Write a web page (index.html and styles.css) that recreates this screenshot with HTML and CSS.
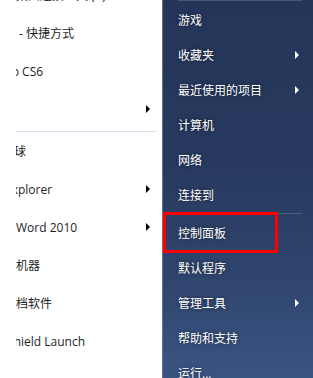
FILE: index.html
```html
<!DOCTYPE html>
<html lang="zh-CN">
<head>
<meta charset="utf-8">
<title>开始菜单</title>
<link rel="stylesheet" href="styles.css">
</head>
<body>
<div class="menu">
  <div class="left">
    <div class="list">
      <div class="row"><div class="txt"><span class="pre x0">远程</span><span class="vis">桌面连接工具 (C)</span></div></div>
      <div class="row"><div class="txt"><span class="pre x0">Adobe Photoshop CS6</span><span class="vis"> - 快捷方式</span></div></div>
      <div class="row"><div class="txt"><span class="pre x3">Adobe Photoshop</span><span class="vis"> CS6</span></div></div>
      <div class="row"><div class="txt"><span class="pre x0">画图</span><span class="vis"></span></div><span class="arrow"></span></div>
      <div class="sep"></div>
      <div class="row"><div class="txt"><span class="pre x10">Google 地球</span><span class="vis"></span></div></div>
      <div class="row"><div class="txt"><span class="pre x2">Internet Ex</span><span class="vis">plorer</span></div><span class="arrow"></span></div>
      <div class="row"><div class="txt"><span class="pre x0">Microsoft </span><span class="vis">Word 2010</span></div><span class="arrow"></span></div>
      <div class="row"><div class="txt"><span class="pre x0">虚拟</span><span class="vis">机器</span></div></div>
      <div class="row"><div class="txt"><span class="pre x0">文</span><span class="vis">档软件</span></div></div>
      <div class="row"><div class="txt"><span class="pre x5">InstallSh</span><span class="vis">ield Launch</span></div></div>
    </div>
  </div>
  <div class="right">
    <div class="rlist">
      <div class="rsep"></div>
      <div class="ritem">游戏</div>
      <div class="ritem"><span class="rtext">收藏夹</span><span class="rarrow"></span></div>
      <div class="ritem"><span class="rtext">最近使用的项目</span><span class="rarrow"></span></div>
      <div class="ritem">计算机</div>
      <div class="ritem">网络</div>
      <div class="ritem">连接到</div>
      <div class="rsep"></div>
      <div class="ritem hl">控制面板<span class="mark"></span></div>
      <div class="ritem">默认程序</div>
      <div class="ritem"><span class="rtext">管理工具</span><span class="rarrow"></span></div>
      <div class="ritem">帮助和支持</div>
      <div class="ritem">运行...</div>
    </div>
  </div>
</div>
</body>
</html>
```

FILE: styles.css
```css
* { box-sizing: border-box; }
html, body { margin: 0; padding: 0; }
body {
  width: 313px;
  height: 378px;
  overflow: hidden;
  background: #fff;
  font-family: "Open Sans", "Noto Sans CJK SC", sans-serif;
  font-size: 12px;
}
.menu { display: flex; height: 378px; }

.left { width: 162px; background: #fff; color: #1e1e1e; overflow: hidden; }
.list { margin-top: -24px; }
.row {
  display: flex;
  align-items: center;
  height: 38px;
  padding: 0 12px 0 16px;
}
.txt { flex: 1; min-width: 0; display: flex; overflow: hidden; white-space: nowrap; }
.pre {
  display: flex;
  justify-content: flex-end;
  flex: 0 0 0;
  min-width: 0;
  overflow: visible;
  white-space: nowrap;
}
.x0 { flex-basis: 0; }
.x2 { flex-basis: 2px; }
.x3 { flex-basis: 3px; }
.x5 { flex-basis: 5px; }
.x10 { flex-basis: 10px; }
.vis { white-space: pre; }
.arrow {
  width: 0; height: 0;
  border-left: 4px solid #000;
  border-top: 4px solid transparent;
  border-bottom: 4px solid transparent;
}
.sep { height: 4px; padding-top: 3px; }
.sep::after {
  content: "";
  display: block;
  height: 1px;
  margin: 0 5px 0 16px;
  background: #d6e3f1;
}

.right {
  flex: 1;
  border-left: 1px solid #66728c;
  color: #fff;
  overflow: hidden;
  background:
    radial-gradient(circle at 275px 22px, rgba(95,40,75,.55) 0, rgba(95,40,75,0) 9px),
    radial-gradient(circle at 270px 52px, rgba(20,40,80,.5) 0, rgba(20,40,80,0) 8px),
    radial-gradient(circle at 272px 97px, rgba(20,45,70,.5) 0, rgba(20,45,70,0) 9px),
    radial-gradient(circle at 268px 275px, rgba(30,70,80,.35) 0, rgba(30,70,80,0) 9px),
    radial-gradient(circle at 270px 345px, rgba(20,45,90,.5) 0, rgba(20,45,90,0) 9px),
    linear-gradient(180deg, #25355a 0%, #283a5f 45%, #30466f 75%, #3a5482 100%);
}
.rlist { margin-top: -1px; }
.rsep { height: 3px; padding-top: 1px; }
.rsep::after {
  content: "";
  display: block;
  height: 1px;
  margin: 0 11px 0 15px;
  background: rgba(150,170,200,.28);
}
.ritem {
  position: relative;
  display: flex;
  align-items: center;
  justify-content: space-between;
  height: 35px;
  padding: 0 14px 0 15px;
  text-shadow: 0 0 4px rgba(0,0,0,.55);
}
.rarrow {
  width: 0; height: 0;
  border-left: 4px solid #fff;
  border-top: 4px solid transparent;
  border-bottom: 4px solid transparent;
}
.mark {
  position: absolute;
  left: 0;
  top: -3px;
  width: 115px;
  height: 41px;
  border: 3px solid #ff0000;
}
```
